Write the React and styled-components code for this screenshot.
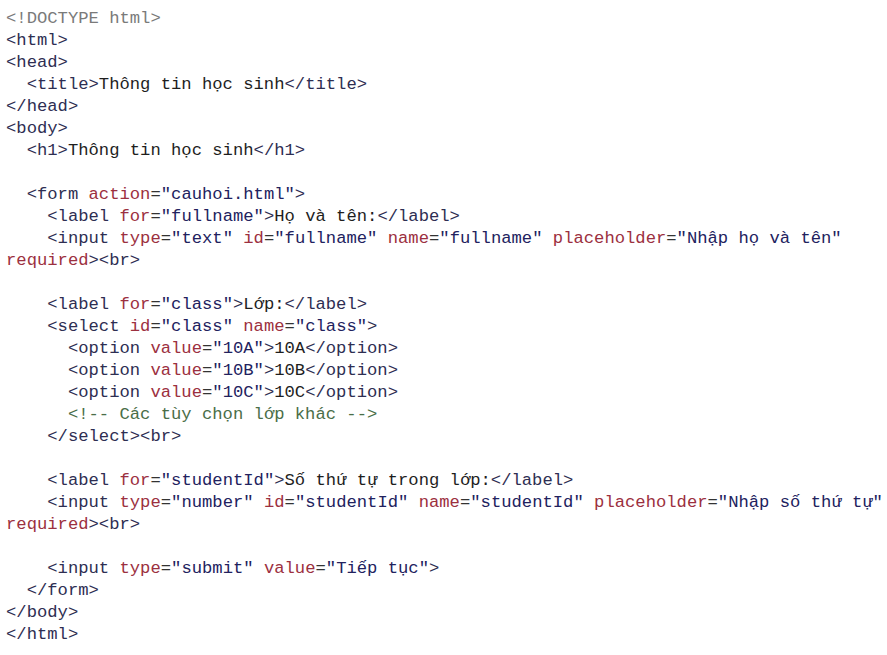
import React from "react";
import styled, { createGlobalStyle } from "styled-components";

const Global = createGlobalStyle`
  html, body { margin: 0; padding: 0; background: #ffffff; }
`;

const Code = styled.div`
  display: flex;
  flex-direction: column;
  padding: 8px 0 0 6px;
  font-family: "Liberation Mono", "DejaVu Sans Mono", monospace;
  font-size: 17.2px;
  line-height: 22px;
  color: #222;
  white-space: pre;
`;

const Line = styled.div`
  height: 22px;
`;

const colors = {
  tag: "#2e2e52",
  attr: "#9c3040",
  val: "#22225e",
  text: "#1e1e1e",
  comment: "#4a6e48",
  doctype: "#7a7a7a",
  punct: "#333",
};

const Tok = styled.span`
  color: ${(p) => colors[p.$k] || "#222"};
`;

const T = (s) => ["tag", s];
const A = (s) => ["attr", s];
const V = (s) => ["val", s];
const X = (s) => ["text", s];
const P = (s) => ["punct", s];
const C = (s) => ["comment", s];
const D = (s) => ["doctype", s];

const lines = [
  [D("<!DOCTYPE html>")],
  [T("<html>")],
  [T("<head>")],
  [X("  "), T("<title>"), X("Thông tin học sinh"), T("</title>")],
  [T("</head>")],
  [T("<body>")],
  [X("  "), T("<h1>"), X("Thông tin học sinh"), T("</h1>")],
  [],
  [X("  "), T("<form "), A("action"), P("="), V('"cauhoi.html"'), T(">")],
  [X("    "), T("<label "), A("for"), P("="), V('"fullname"'), T(">"), X("Họ và tên:"), T("</label>")],
  [
    X("    "), T("<input "), A("type"), P("="), V('"text"'), X(" "), A("id"), P("="), V('"fullname"'),
    X(" "), A("name"), P("="), V('"fullname"'), X(" "), A("placeholder"), P("="), V('"Nhập họ và tên"'),
  ],
  [A("required"), T(">"), T("<br>")],
  [],
  [X("    "), T("<label "), A("for"), P("="), V('"class"'), T(">"), X("Lớp:"), T("</label>")],
  [X("    "), T("<select "), A("id"), P("="), V('"class"'), X(" "), A("name"), P("="), V('"class"'), T(">")],
  [X("      "), T("<option "), A("value"), P("="), V('"10A"'), T(">"), X("10A"), T("</option>")],
  [X("      "), T("<option "), A("value"), P("="), V('"10B"'), T(">"), X("10B"), T("</option>")],
  [X("      "), T("<option "), A("value"), P("="), V('"10C"'), T(">"), X("10C"), T("</option>")],
  [X("      "), C("<!-- Các tùy chọn lớp khác -->")],
  [X("    "), T("</select>"), T("<br>")],
  [],
  [X("    "), T("<label "), A("for"), P("="), V('"studentId"'), T(">"), X("Số thứ tự trong lớp:"), T("</label>")],
  [
    X("    "), T("<input "), A("type"), P("="), V('"number"'), X(" "), A("id"), P("="), V('"studentId"'),
    X(" "), A("name"), P("="), V('"studentId"'), X(" "), A("placeholder"), P("="), V('"Nhập số thứ tự"'),
  ],
  [A("required"), T(">"), T("<br>")],
  [],
  [X("    "), T("<input "), A("type"), P("="), V('"submit"'), X(" "), A("value"), P("="), V('"Tiếp tục"'), T(">")],
  [X("  "), T("</form>")],
  [T("</body>")],
  [T("</html>")],
];

export default function App() {
  return (
    <>
      <Global />
      <Code>
        {lines.map((toks, i) => (
          <Line key={i}>
            {toks.map(([k, s], j) => (
              <Tok key={j} $k={k}>
                {s}
              </Tok>
            ))}
          </Line>
        ))}
      </Code>
    </>
  );
}
